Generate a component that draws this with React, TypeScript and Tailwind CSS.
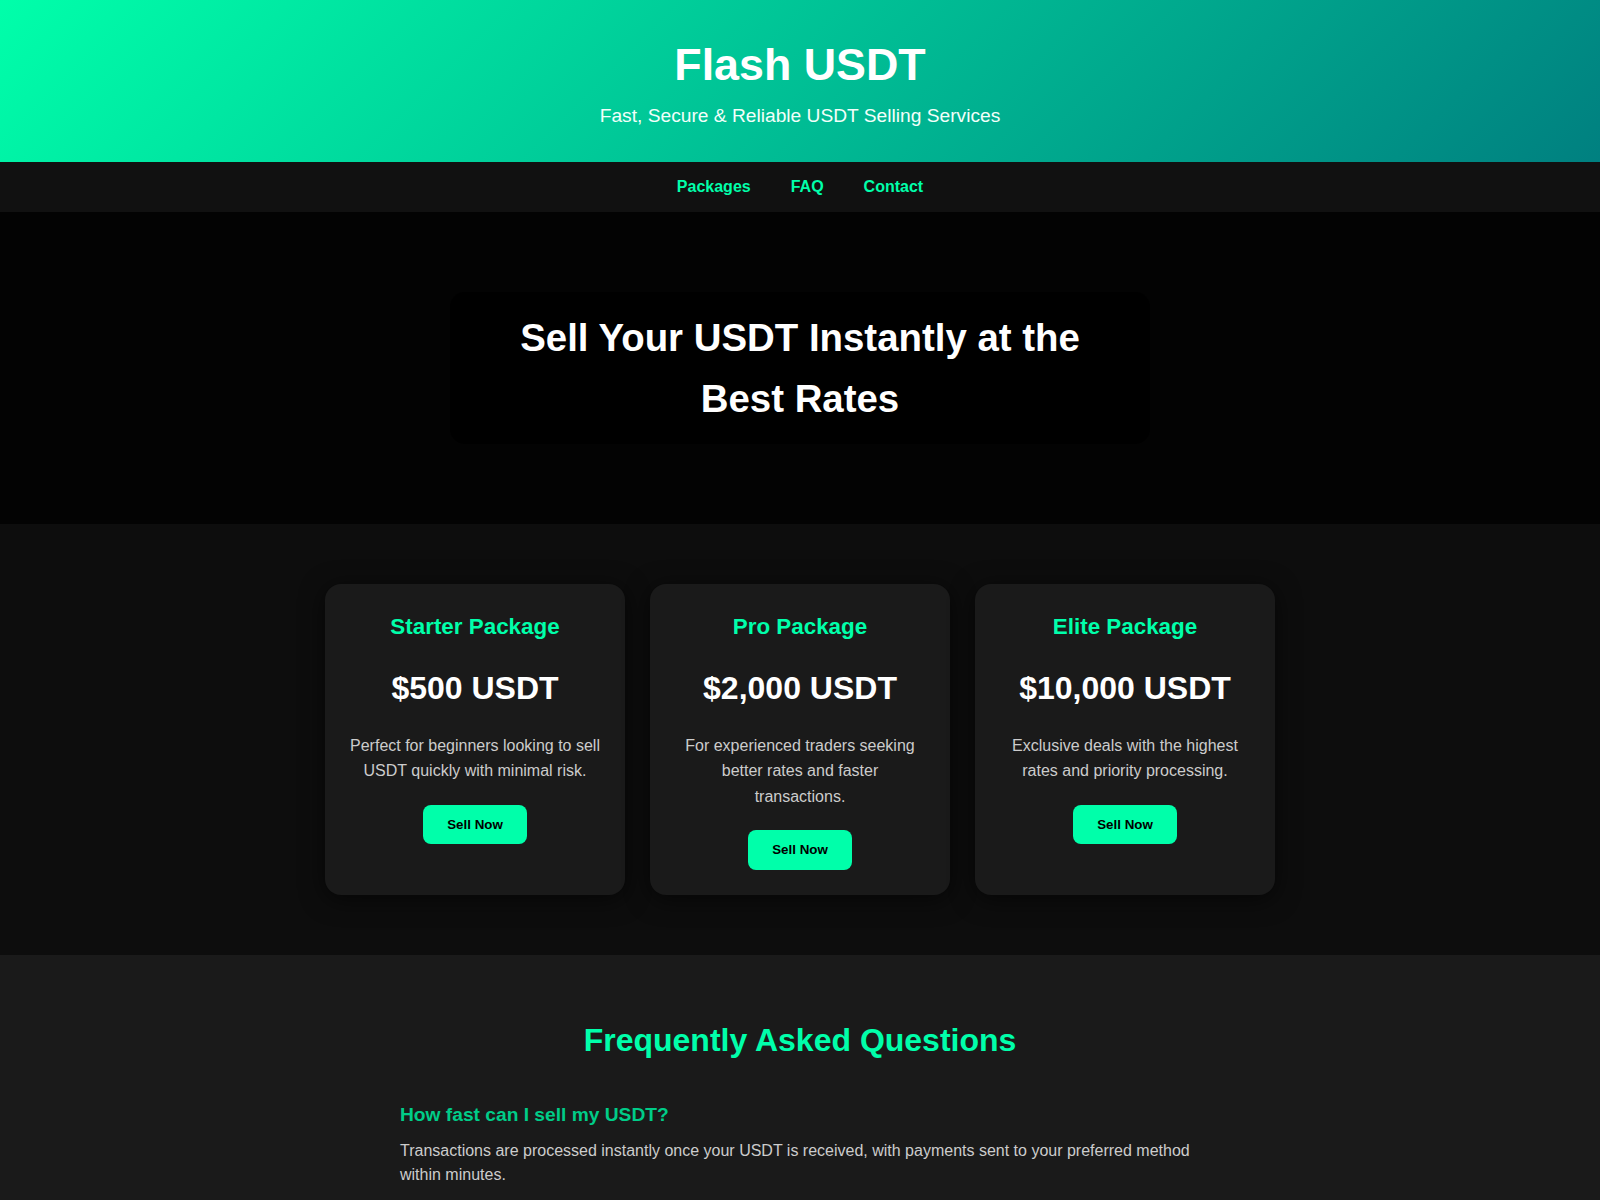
const packages = [
  {
    name: "Starter Package",
    price: "$500 USDT",
    text: "Perfect for beginners looking to sell USDT quickly with minimal risk.",
  },
  {
    name: "Pro Package",
    price: "$2,000 USDT",
    text: "For experienced traders seeking better rates and faster transactions.",
  },
  {
    name: "Elite Package",
    price: "$10,000 USDT",
    text: "Exclusive deals with the highest rates and priority processing.",
  },
];

const faqs = [
  {
    q: "How fast can I sell my USDT?",
    a: "Transactions are processed instantly once your USDT is received, with payments sent to your preferred method within minutes.",
  },
  {
    q: "Which payment methods do you support?",
    a: "We support bank transfers, mobile wallets and major e-wallets depending on your region.",
  },
  {
    q: "Is my transaction secure?",
    a: "Every order is verified and tracked end to end so your funds stay safe from start to finish.",
  },
];

export default function App() {
  return (
    <div className="min-h-screen bg-[#1a1a1a] font-['Liberation_Sans',Arial,sans-serif] text-white">
      <header className="bg-[linear-gradient(135deg,#00ffaa,#008080)] px-5 pt-[39px] pb-[35px] text-center">
        <h1 className="text-[2.8rem] leading-[1.15] font-bold text-white">Flash USDT</h1>
        <p className="mt-[14px] text-[1.2rem] leading-[1.15] text-[#f2fffa]">
          Fast, Secure &amp; Reliable USDT Selling Services
        </p>
      </header>

      <nav className="flex justify-center bg-[#111111] py-[13px]">
        {["Packages", "FAQ", "Contact"].map((item) => (
          <a
            key={item}
            href={`#${item.toLowerCase()}`}
            className="mx-5 text-base leading-6 font-bold text-[#00ffaa]"
          >
            {item}
          </a>
        ))}
      </nav>

      <section className="bg-[#030303] px-5 py-[80px]">
        <div className="mx-auto max-w-[700px] rounded-[15px] bg-black px-[30px] py-[15px] text-center">
          <h2 className="text-[2.4rem] leading-[1.6] font-bold text-white">
            Sell Your USDT Instantly at the Best Rates
          </h2>
        </div>
      </section>

      <section id="packages" className="bg-[#0d0d0d] py-[60px]">
        <div className="flex justify-center gap-[25px]">
          {packages.map((pkg) => (
            <div
              key={pkg.name}
              className="w-[300px] rounded-2xl bg-[#1a1a1a] px-[24.5px] py-[25px] text-center shadow-[0_4px_24px_rgba(0,0,0,0.6)]"
            >
              <h3 className="text-[1.4rem] leading-[1.6] font-bold text-[#00ffaa]">{pkg.name}</h3>
              <p className="mt-[18px] text-[2rem] leading-[1.6] font-bold text-white">{pkg.price}</p>
              <p className="mt-[18px] text-base leading-[1.6] text-[#cccccc]">{pkg.text}</p>
              <button className="mt-[21px] rounded-lg bg-[#00ffaa] px-6 py-3 text-[13.333px] leading-[1.15] font-bold text-black">
                Sell Now
              </button>
            </div>
          ))}
        </div>
      </section>

      <section id="faq" className="bg-[#1a1a1a] px-5 py-[60px]">
        <h2 className="text-center text-[2rem] leading-[1.6] font-bold text-[#00ffaa]">
          Frequently Asked Questions
        </h2>
        <div className="mx-auto max-w-[800px]">
          {faqs.map((faq) => (
            <div key={faq.q} className="mt-[34px]">
              <h3 className="text-[1.2rem] leading-[1.6] font-bold text-[#00cc88]">{faq.q}</h3>
              <p className="mt-2 text-base leading-[1.55] text-[#cccccc]">{faq.a}</p>
            </div>
          ))}
        </div>
      </section>

      <footer id="contact" className="bg-[#111111] px-5 py-10 text-center text-sm text-[#999999]">
        <p className="text-base font-bold text-[#00ffaa]">Contact</p>
        <p className="mt-2">support@flashusdt.com</p>
        <p className="mt-4">© 2024 Flash USDT. All rights reserved.</p>
      </footer>
    </div>
  );
}
